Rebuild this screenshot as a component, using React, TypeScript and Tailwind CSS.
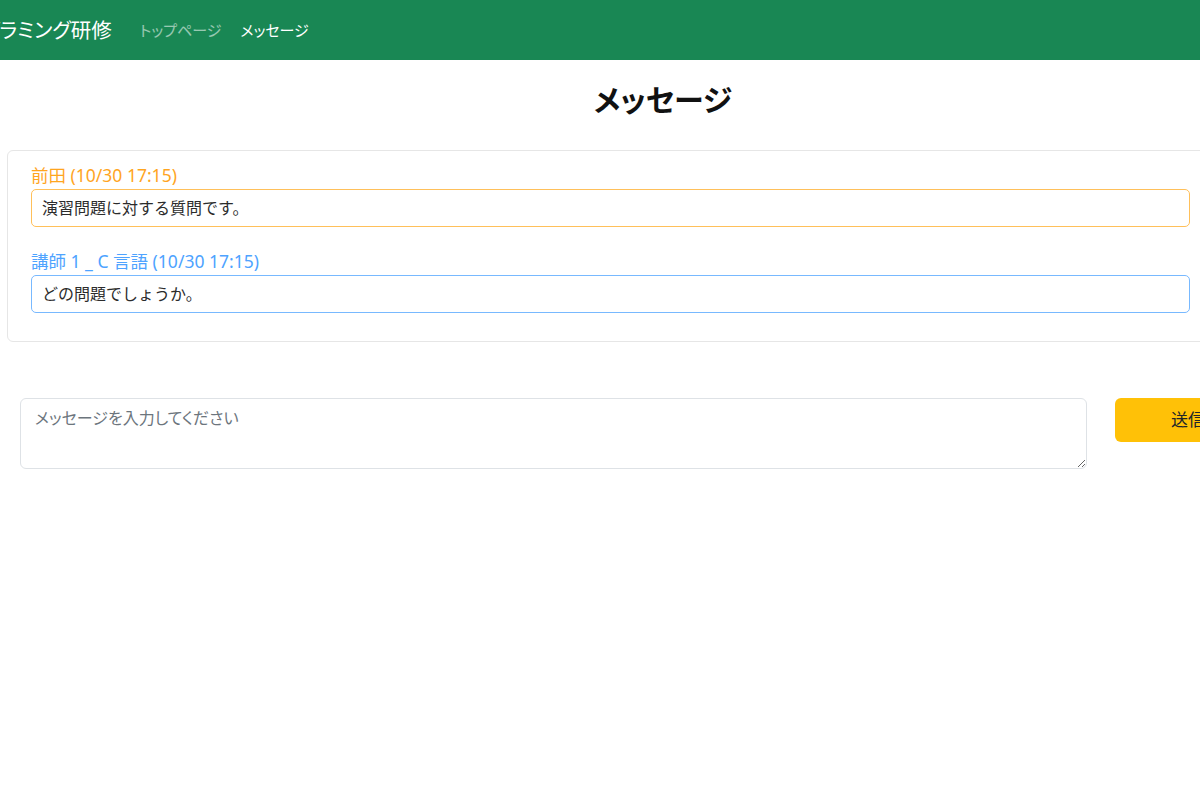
import React, { useState } from 'react';

type Message = {
  name: string;
  time: string;
  text: string;
  tone: 'student' | 'teacher';
};

const messages: Message[] = [
  { name: '前田', time: '(10/30 17:15)', text: '演習問題に対する質問です。', tone: 'student' },
  { name: '講師 1 _ C 言語', time: '(10/30 17:15)', text: 'どの問題でしょうか。', tone: 'teacher' },
];

const MessageItem: React.FC<{ message: Message; first?: boolean }> = ({ message, first }) => {
  const isStudent = message.tone === 'student';
  return (
    <div className={first ? '' : 'mt-[22px]'}>
      <div
        className={
          isStudent
            ? 'h-6 leading-6 text-[17.5px] text-[#ffa51f] whitespace-nowrap'
            : 'h-6 leading-6 text-[17.5px] text-[#4ea3ff] whitespace-nowrap'
        }
      >
        {message.name} {message.time}
      </div>
      <div
        className={
          isStudent
            ? 'mt-[2px] h-[38px] flex items-center rounded-[5px] border-[1.5px] border-[#ffc05a] px-[10px] text-[16px] text-[#2b2b2b]'
            : 'mt-[2px] h-[38px] flex items-center rounded-[5px] border-[1.5px] border-[#78b9ff] px-[10px] text-[16px] text-[#2b2b2b]'
        }
      >
        {message.text}
      </div>
    </div>
  );
};

const App: React.FC = () => {
  const [draft, setDraft] = useState('');

  return (
    <div className="w-[1200px] h-[800px] overflow-hidden bg-white font-['Noto_Sans','Noto_Sans_CJK_JP',sans-serif] text-[#212529]">
      <div className="w-[1326px]">
        {/* Navbar */}
        <nav className="h-[60px] bg-[#198754] flex items-center [font-feature-settings:'palt']">
          <span className="-ml-[58px] text-[20.5px] text-white leading-none whitespace-nowrap">
            プログラミング研修
          </span>
          <span className="ml-[28px] text-[15px] text-white/55 whitespace-nowrap">トップページ</span>
          <span className="ml-[19px] text-[15px] text-white whitespace-nowrap">メッセージ</span>
        </nav>

        {/* Title */}
        <h1 className="mt-[20px] text-center text-[30px] font-bold leading-[40px] text-[#111] [font-feature-settings:'palt']">
          メッセージ
        </h1>

        {/* Message list */}
        <div className="mt-[30px] ml-[7px] w-[1208px] rounded-md border border-[#e6e6e6] pl-[23px] pr-6 pt-3 pb-[28px]">
          {messages.map((m, i) => (
            <MessageItem key={i} message={m} first={i === 0} />
          ))}
        </div>

        {/* Composer */}
        <div className="mt-[56px] ml-[20px] flex items-start">
          <textarea
            value={draft}
            onChange={(e) => setDraft(e.target.value)}
            placeholder="メッセージを入力してください"
            className="w-[1067px] h-[71px] rounded-md border border-[#dee2e6] px-[14px] py-[7px] text-[16px] leading-6 text-[#212529] placeholder:text-[#6c757d] outline-none [font-feature-settings:'palt']"
          />
          <button
            type="button"
            className="ml-[28px] w-[146px] h-[44px] rounded-md bg-[#ffc107] text-[17px] text-[#212529]"
          >
            送信
          </button>
        </div>
      </div>
    </div>
  );
};

export default App;
